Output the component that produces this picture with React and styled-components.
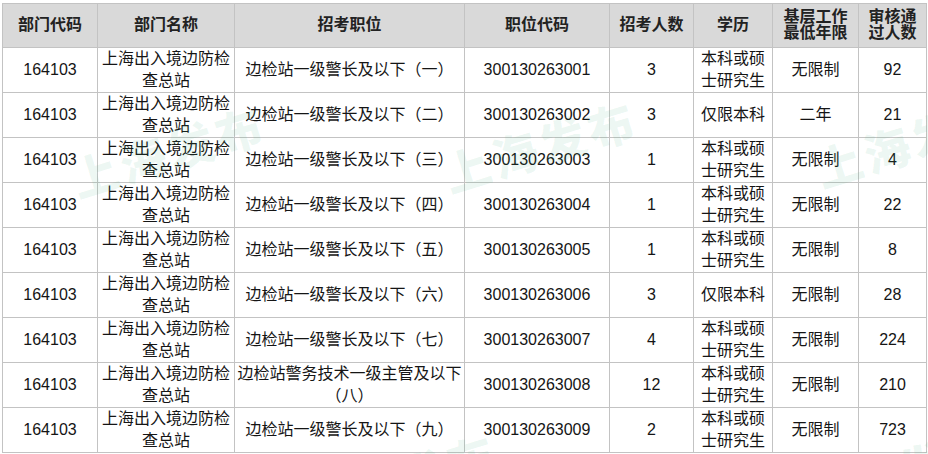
import styled, { createGlobalStyle } from 'styled-components'

const GlobalStyle = createGlobalStyle`
    html, body {
        margin: 0;
        padding: 0;
        background: #ffffff;
    }
    body {
        font-family: "Liberation Sans", "Noto Sans CJK SC", sans-serif;
        color: #111111;
    }
`

const Page = styled.div`
    position: relative;
    width: 928px;
    height: 454px;
    overflow: hidden;
    padding: 3px 0 0 2px;
    box-sizing: border-box;
`

const Table = styled.table`
    border-collapse: collapse;
    table-layout: fixed;
    width: 924px;
    font-size: 16px;
`

const HeadCell = styled.th`
    height: 42.5px;
    padding: 0 2px;
    background: #d9d9d9;
    border: 1px solid #c3c3c3;
    font-weight: 700;
    text-align: center;
    vertical-align: middle;
    line-height: ${(props) => (props.$tight ? '16px' : '22px')};
    color: #222222;
`

const Cell = styled.td`
    height: 43.6px;
    padding: 0 2px;
    border: 1px solid #c3c3c3;
    text-align: center;
    vertical-align: middle;
    line-height: 22px;
    color: #151515;
`

const Watermark = styled.div`
    position: absolute;
    left: ${(props) => props.$x}px;
    top: ${(props) => props.$y}px;
    transform: translate(-50%, -50%) rotate(-17deg);
    font-family: "Noto Sans CJK SC", sans-serif;
    font-weight: 900;
    font-size: 46px;
    letter-spacing: 4px;
    color: rgba(70, 180, 130, 0.1);
    white-space: nowrap;
    pointer-events: none;
`

const columns = [95, 137, 230, 145, 84, 79, 86, 68]

const headers = [
    ['部门代码'],
    ['部门名称'],
    ['招考职位'],
    ['职位代码'],
    ['招考人数'],
    ['学历'],
    ['基层工作', '最低年限'],
    ['审核通', '过人数'],
]

const rows = [
    ['一', '300130263001', 3, '本科或硕士研究生', '无限制', 92],
    ['二', '300130263002', 3, '仅限本科', '二年', 21],
    ['三', '300130263003', 1, '本科或硕士研究生', '无限制', 4],
    ['四', '300130263004', 1, '本科或硕士研究生', '无限制', 22],
    ['五', '300130263005', 1, '本科或硕士研究生', '无限制', 8],
    ['六', '300130263006', 3, '仅限本科', '无限制', 28],
    ['七', '300130263007', 4, '本科或硕士研究生', '无限制', 224],
    ['八', '300130263008', 12, '本科或硕士研究生', '无限制', 210, true],
    ['九', '300130263009', 2, '本科或硕士研究生', '无限制', 723],
]

// faint tiled "上海发布" watermark, partly off the edges like the source image
const marks = [
    [168, 150],
    [540, 145],
    [912, 140],
    [400, 478],
    [900, 470],
]

function App() {
    return (
        <Page>
            <GlobalStyle />
            <Table>
                <colgroup>
                    {columns.map((w, i) => (
                        <col key={i} style={{ width: w }} />
                    ))}
                </colgroup>
                <thead>
                    <tr>
                        {headers.map((lines, i) => (
                            <HeadCell key={i} $tight={lines.length > 1}>
                                {lines.map((l, j) => (
                                    <div key={j}>{l}</div>
                                ))}
                            </HeadCell>
                        ))}
                    </tr>
                </thead>
                <tbody>
                    {rows.map(([num, code, count, edu, years, passed, tech]) => (
                        <tr key={code}>
                            <Cell>164103</Cell>
                            <Cell>上海出入境边防检查总站</Cell>
                            <Cell>
                                {tech
                                    ? `边检站警务技术一级主管及以下（${num}）`
                                    : `边检站一级警长及以下（${num}）`}
                            </Cell>
                            <Cell>{code}</Cell>
                            <Cell>{count}</Cell>
                            <Cell>{edu}</Cell>
                            <Cell>{years}</Cell>
                            <Cell>{passed}</Cell>
                        </tr>
                    ))}
                </tbody>
            </Table>
            {marks.map(([x, y], i) => (
                <Watermark key={i} $x={x} $y={y}>
                    上海发布
                </Watermark>
            ))}
        </Page>
    )
}

export default App
